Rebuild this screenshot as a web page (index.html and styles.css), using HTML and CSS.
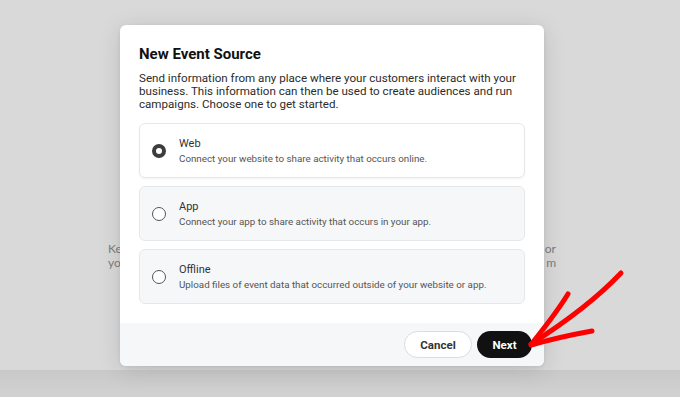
FILE: index.html
```html
<!DOCTYPE html>
<html>
<head>
<meta charset="utf-8">
<link rel="stylesheet" href="styles.css">
</head>
<body>
<div class="page">
  <div class="page-main">
    <div class="bg-row">
      <p class="bg-text bg-left">Ke<br>yo</p>
      <p class="bg-text bg-right">or<br>m</p>
    </div>
  </div>
  <div class="page-band"></div>
</div>

<div class="modal">
  <div class="modal-body">
    <h1 class="modal-title">New Event Source</h1>
    <p class="modal-desc">Send information from any place where your customers interact with your business. This information can then be used to create audiences and run campaigns. Choose one to get started.</p>
    <div class="options">
      <label class="option option-selected">
        <span class="radio radio-on"></span>
        <span class="option-text">
          <span class="option-title">Web</span>
          <span class="option-sub">Connect your website to share activity that occurs online.</span>
        </span>
      </label>
      <label class="option">
        <span class="radio"></span>
        <span class="option-text">
          <span class="option-title">App</span>
          <span class="option-sub">Connect your app to share activity that occurs in your app.</span>
        </span>
      </label>
      <label class="option">
        <span class="radio"></span>
        <span class="option-text">
          <span class="option-title">Offline</span>
          <span class="option-sub">Upload files of event data that occurred outside of your website or app.</span>
        </span>
      </label>
    </div>
  </div>
  <div class="modal-footer">
    <button class="btn btn-cancel">Cancel</button>
    <button class="btn btn-next">Next</button>
  </div>
</div>

<svg class="arrow" width="680" height="397" viewBox="0 0 680 397">
  <g fill="none" stroke="#ff0000" stroke-width="5" stroke-linecap="round" stroke-linejoin="round">
    <path d="M621 273 C 603 292, 572 318, 531 344"/>
    <path d="M568 294 C 560 307, 549 322, 533 342"/>
    <path d="M592 331 C 570 335, 552 339, 531 345"/>
  </g>
</svg>
</body>
</html>
```

FILE: styles.css
```css
* { box-sizing: border-box; }
html, body { margin: 0; padding: 0; }
body {
  width: 680px;
  height: 397px;
  overflow: hidden;
  background: #d8d8d8;
  font-family: "Roboto", "Liberation Sans", sans-serif;
  position: relative;
}
.page {
  display: flex;
  flex-direction: column;
  height: 397px;
}
.page-main {
  height: 370px;
  background: #d9d9d9;
  padding-top: 242px;
}
.page-band {
  flex: 1;
  background: linear-gradient(#c9c9c9, #d2d2d2);
}
.bg-row {
  display: flex;
  justify-content: space-between;
  padding: 0 124px 0 108px;
}
.bg-text {
  margin: 0;
  font-family: "Lato", sans-serif;
  font-size: 12px;
  line-height: 13.5px;
  color: #7d7d7d;
}
.bg-right { text-align: right; }

.modal {
  position: absolute;
  left: 120px;
  top: 25px;
  width: 424px;
  background: #fff;
  border-radius: 6px;
  box-shadow: 0 4px 24px rgba(0,0,0,0.12), 0 1px 4px rgba(0,0,0,0.08);
  overflow: hidden;
}
.modal-body {
  padding: 19px 19px 19px 19px;
}
.modal-title {
  margin: 0;
  font-size: 15px;
  line-height: 20px;
  font-weight: 700;
  color: #111;
}
.modal-desc {
  margin: 8px 0 12px 0;
  font-size: 11.6px;
  line-height: 13px;
  color: #2b2b2b;
}
.options {
  display: flex;
  flex-direction: column;
  gap: 8px;
}
.option {
  display: flex;
  align-items: center;
  height: 55px;
  padding: 0 12px;
  gap: 13px;
  background: #f6f7f8;
  border: 1px solid #e6e7e9;
  border-radius: 6px;
}
.option-selected {
  background: #fff;
  box-shadow: 0 1px 2px rgba(0,0,0,0.05);
}
.radio {
  width: 14px;
  height: 14px;
  border-radius: 50%;
  border: 1px solid #555;
  background: #fff;
  flex: none;
}
.radio-on {
  border: 4px solid #3d3d3d;
}
.option-text {
  display: flex;
  flex-direction: column;
  gap: 3px;
  margin-top: 1px;
}
.option-title {
  font-size: 11px;
  line-height: 13px;
  color: #333;
}
.option-sub {
  font-size: 9.8px;
  line-height: 12px;
  color: #555;
}
.modal-footer {
  display: flex;
  justify-content: flex-end;
  align-items: center;
  gap: 5px;
  height: 43px;
  padding: 0 12px;
  background: #f6f7f8;
}
.btn {
  height: 27px;
  border-radius: 14px;
  font-family: "Roboto", "Liberation Sans", sans-serif;
  font-size: 11.5px;
  font-weight: 700;
  padding: 0;
}
.btn-cancel {
  width: 68px;
  background: #fff;
  color: #333;
  border: 1px solid #dcdcdc;
}
.btn-next {
  width: 55px;
  background: #111;
  color: #fff;
  border: none;
}
.arrow {
  position: absolute;
  left: 0;
  top: 0;
  pointer-events: none;
}
```
